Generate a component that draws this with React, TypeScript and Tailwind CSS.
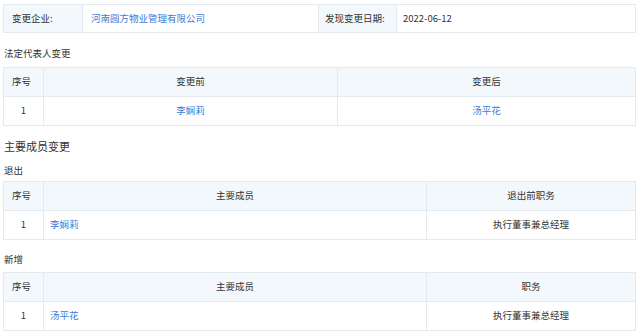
import React from 'react';

const FONT = { fontFamily: '"Noto Sans CJK SC", "Noto Sans", sans-serif' };

const cell = 'border border-[#e3ebf0] text-[9.5px] leading-none whitespace-nowrap';
const head = 'bg-[#f2f8fb] text-[#333]';
const plain = 'text-[#333]';
const link = 'text-[#3b7dd8]';

function SubTitle({ text, className }: { text: string; className: string }) {
  return <div className={`px-[1px] text-[9.5px] leading-[14px] text-[#333] ${className}`}>{text}</div>;
}

function MemberTable({ title, name, duty }: { title: string; name: string; duty: string }) {
  return (
    <table className="w-full table-fixed border-collapse">
      <colgroup>
        <col className="w-[40px]" />
        <col className="w-[383px]" />
        <col />
      </colgroup>
      <thead>
        <tr className="h-[29px]">
          <th className={`${cell} ${head} px-[8px] text-left font-normal`}>序号</th>
          <th className={`${cell} ${head} px-[8px] text-center font-normal`}>主要成员</th>
          <th className={`${cell} ${head} px-[8px] text-center font-normal`}>{title}</th>
        </tr>
      </thead>
      <tbody>
        <tr className="h-[29px]">
          <td className={`${cell} ${plain} px-[8px] text-center`}>1</td>
          <td className={`${cell} ${link} px-[6px] text-left`}>{name}</td>
          <td className={`${cell} ${plain} px-[8px] text-center`}>{duty}</td>
        </tr>
      </tbody>
    </table>
  );
}

export default function App(): React.ReactElement {
  return (
    <div className="w-[640px] h-[336px] overflow-hidden bg-white pl-[3px] pt-[4px] pr-[4px]" style={FONT}>
      <table className="w-full table-fixed border-collapse">
        <colgroup>
          <col className="w-[79px]" />
          <col className="w-[236px]" />
          <col className="w-[78px]" />
          <col />
        </colgroup>
        <tbody>
          <tr className="h-[28px]">
            <td className={`${cell} ${head} px-[8px]`}>变更企业:</td>
            <td className={`${cell} ${link} px-[8px]`}>河南圆方物业管理有限公司</td>
            <td className={`${cell} ${head} px-[6px]`}>发现变更日期:</td>
            <td className={`${cell} ${plain} px-[6px]`}>2022-06-12</td>
          </tr>
        </tbody>
      </table>

      <SubTitle text="法定代表人变更" className="mt-[13px] mb-[7px]" />

      <table className="w-full table-fixed border-collapse">
        <colgroup>
          <col className="w-[40px]" />
          <col className="w-[294px]" />
          <col />
        </colgroup>
        <thead>
          <tr className="h-[29px]">
            <th className={`${cell} ${head} px-[8px] text-left font-normal`}>序号</th>
            <th className={`${cell} ${head} px-[8px] text-center font-normal`}>变更前</th>
            <th className={`${cell} ${head} px-[8px] text-center font-normal`}>变更后</th>
          </tr>
        </thead>
        <tbody>
          <tr className="h-[29px]">
            <td className={`${cell} ${plain} px-[8px] text-center`}>1</td>
            <td className={`${cell} ${link} px-[8px] text-center`}>李娴莉</td>
            <td className={`${cell} ${link} px-[8px] text-center`}>汤平花</td>
          </tr>
        </tbody>
      </table>

      <div className="mt-[13px] px-[1px] text-[11px] leading-[14px] text-[#333]">主要成员变更</div>
      <SubTitle text="退出" className="mt-[10px] mb-[4px]" />
      <MemberTable title="退出前职务" name="李娴莉" duty="执行董事兼总经理" />

      <SubTitle text="新增" className="mt-[12px] mb-[6px]" />
      <MemberTable title="职务" name="汤平花" duty="执行董事兼总经理" />
    </div>
  );
}
